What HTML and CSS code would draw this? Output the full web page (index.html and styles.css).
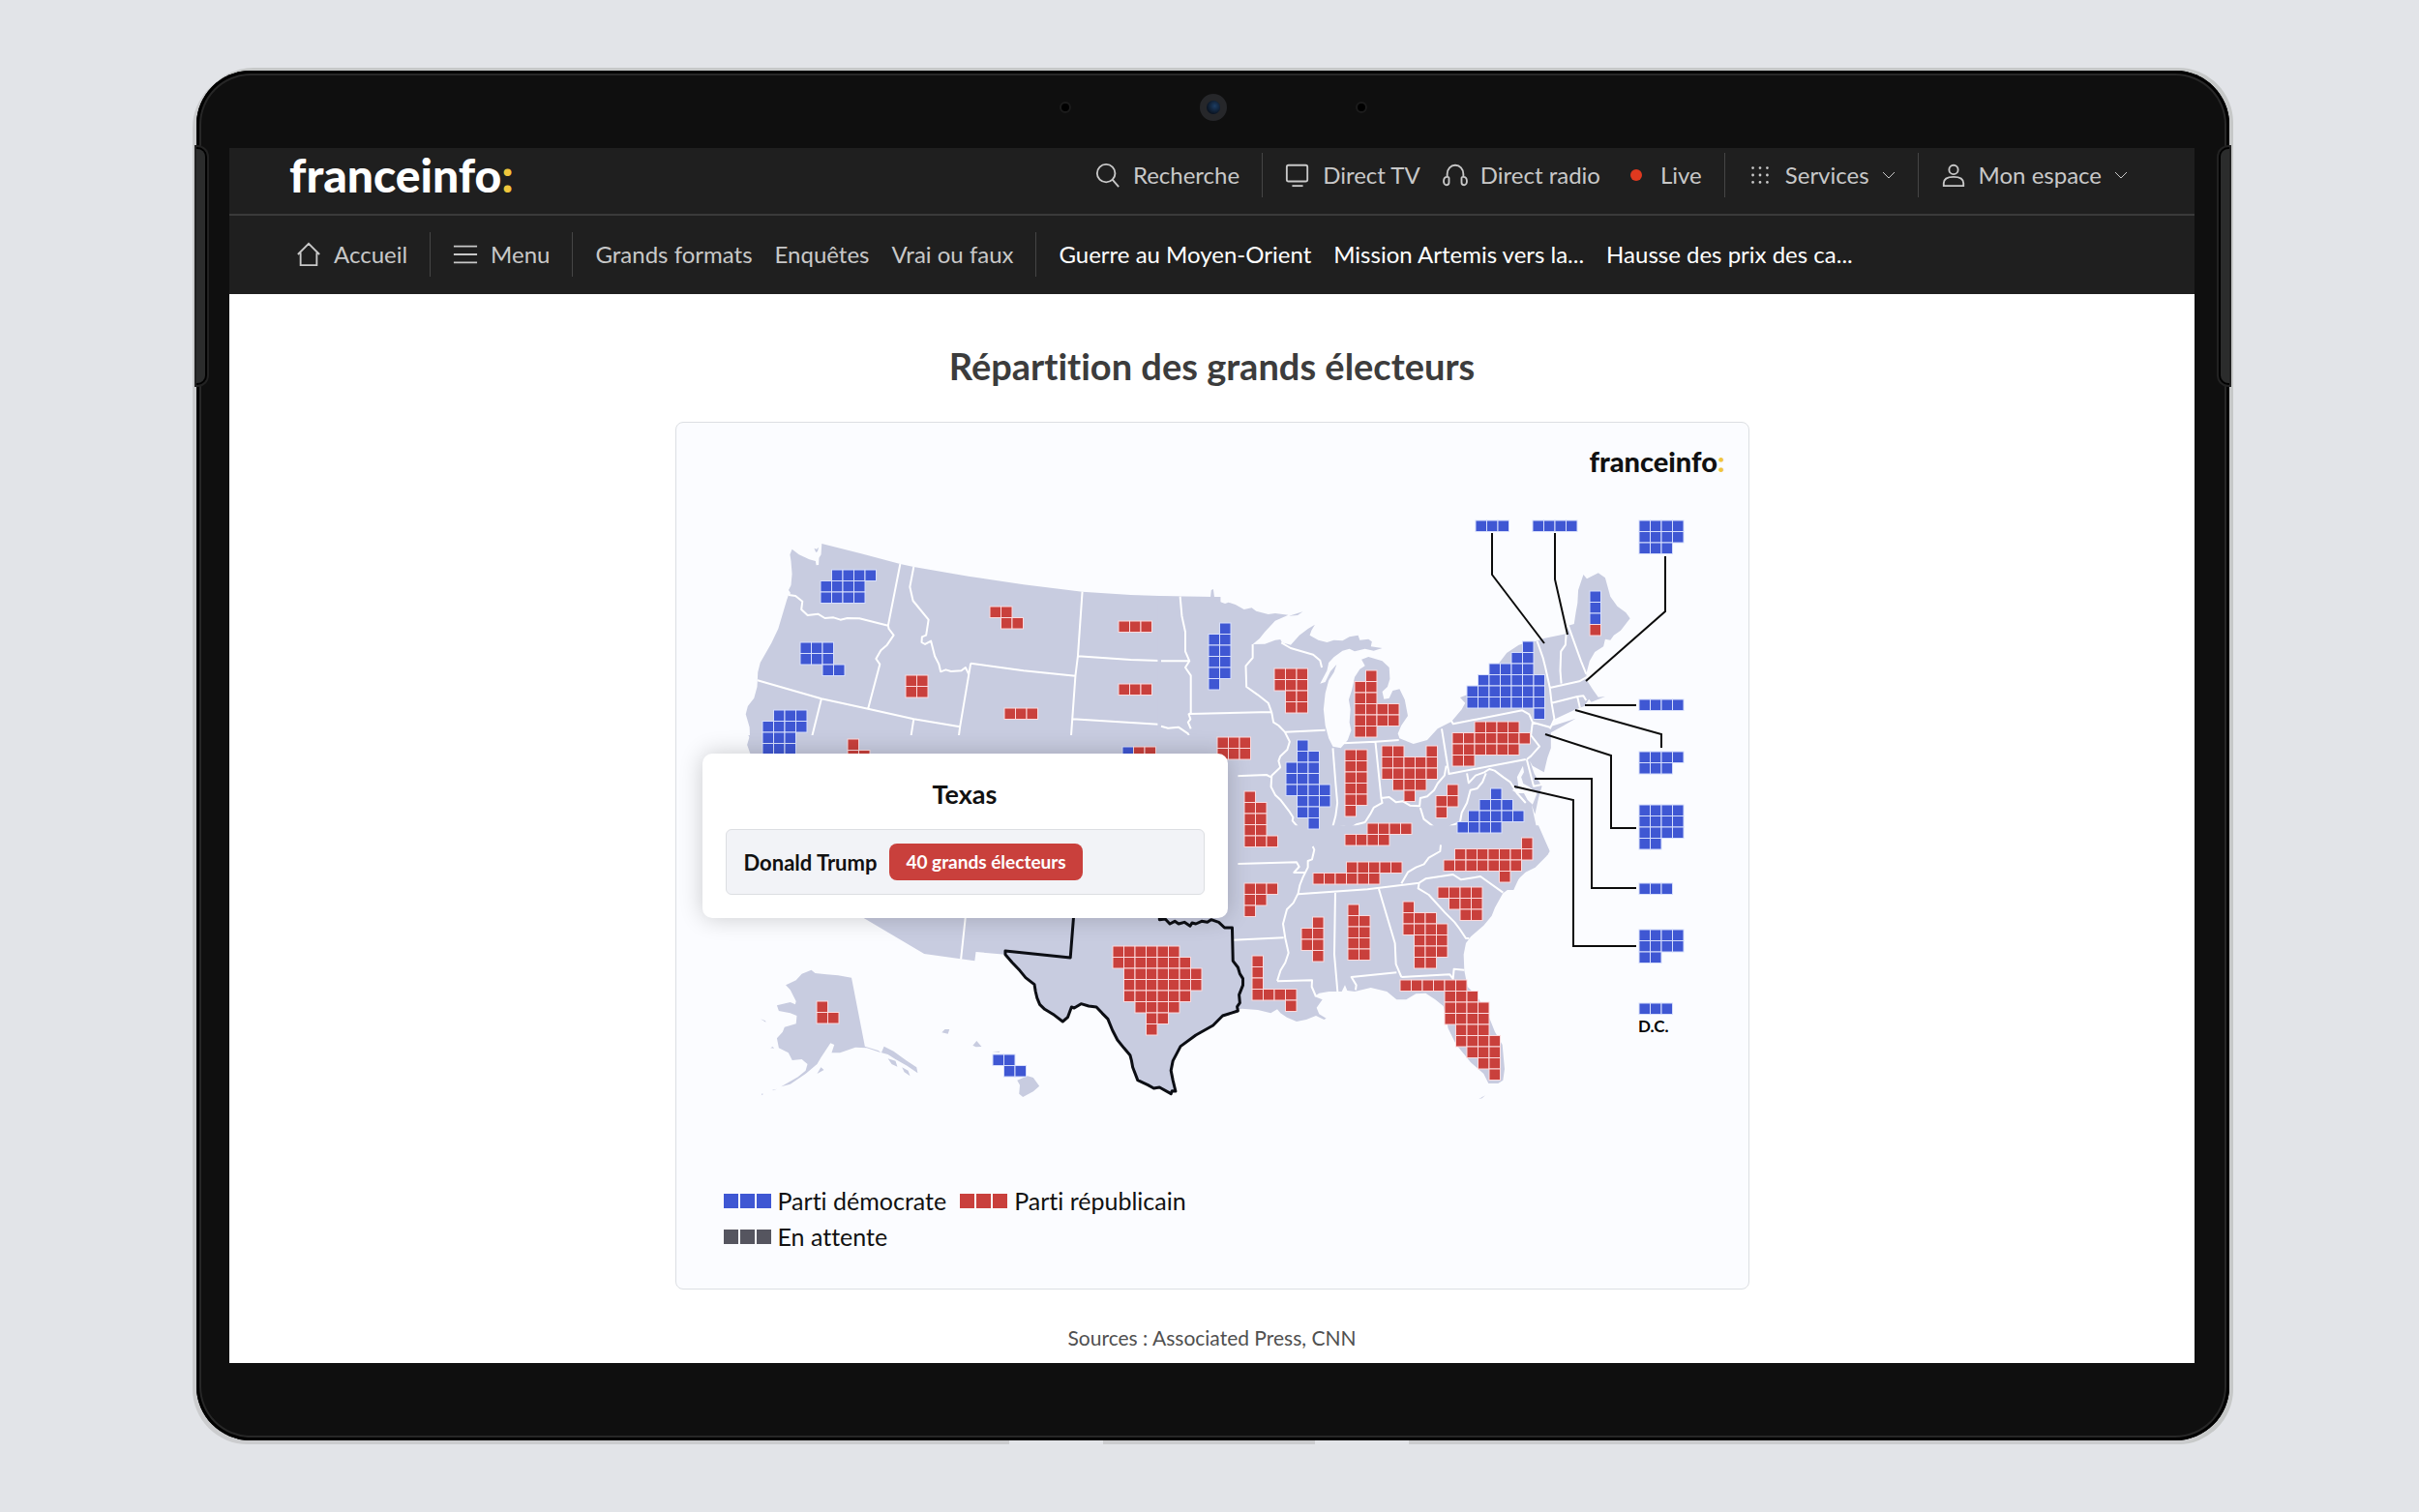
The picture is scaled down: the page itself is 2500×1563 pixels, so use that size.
FILE: index.html
```html
<!DOCTYPE html>
<html lang="fr">
<head>
<meta charset="utf-8">
<meta name="viewport" content="width=device-width, initial-scale=1">
<title>Répartition des grands électeurs - franceinfo</title>
<link rel="stylesheet" href="styles.css">
</head>
<body>
<div class="device">
  <span class="device-side device-side-left"></span>
  <span class="device-side device-side-right"></span>
  <span class="device-foot device-foot-left"></span>
  <span class="device-foot device-foot-right"></span>
  <div class="device-top">
    <span class="sensor"></span>
    <span class="camera"></span>
    <span class="sensor"></span>
  </div>

  <div class="screen">
    <header class="site-header">
      <div class="bar bar-top">
        <a class="logo" href="#">franceinfo<span class="logo-colon">:</span></a>
        <nav class="tools" aria-label="Outils">
          <button class="item" type="button">
            <svg class="icon" viewBox="0 0 28 28"><circle cx="12" cy="12" r="10"/><path d="M19 19L26 27"/></svg>
            Recherche
          </button>
          <span class="rule"></span>
          <a class="item" href="#">
            <svg class="icon" viewBox="0 0 28 28"><rect x="2" y="3" width="23" height="18" rx="2"/><path d="M8 26h12"/></svg>
            Direct TV
          </a>
          <a class="item" href="#">
            <svg class="icon" viewBox="0 0 28 28"><path d="M5 17V13C5 7 9 3 14 3S23 7 23 13V17M5 16C0 16 0 25 4 25C6 25 7 24 7 22V17C7 16 6 16 5 16ZM23 16C28 16 28 25 24 25C22 25 21 24 21 22V17C21 16 22 16 23 16Z"/></svg>
            Direct radio
          </a>
          <a class="item item-live" href="#"><span class="live-dot"></span>Live</a>
          <span class="rule"></span>
          <button class="item" type="button">
            <svg class="icon icon-dots" viewBox="0 0 28 28"><path d="M6 6h0M14 6h0M22 6h0M6 14h0M14 14h0M22 14h0M6 22h0M14 22h0M22 22h0"/></svg>
            Services
            <svg class="chevron" viewBox="0 0 14 14"><path d="M1 4l6 6 6-6"/></svg>
          </button>
          <span class="rule"></span>
          <button class="item" type="button">
            <svg class="icon" viewBox="0 0 28 28"><circle cx="14" cy="8" r="5"/><path d="M3 26V23C3 18 8 16 14 16S25 18 25 23V26Z"/></svg>
            Mon espace
            <svg class="chevron" viewBox="0 0 14 14"><path d="M1 4l6 6 6-6"/></svg>
          </button>
        </nav>
      </div>
      <nav class="bar bar-nav" aria-label="Navigation principale">
        <a class="item" href="#">
          <svg class="icon" viewBox="0 0 28 28"><path d="M2 14L14 2L26 14M5 12V26H23V12"/></svg>
          Accueil
        </a>
        <span class="rule"></span>
        <button class="item" type="button">
          <svg class="icon" viewBox="0 0 28 28"><path d="M1 5H27M1 14H27M1 23H27"/></svg>
          Menu
        </button>
        <span class="rule"></span>
        <a class="item" href="#">Grands formats</a>
        <a class="item" href="#">Enquêtes</a>
        <a class="item" href="#">Vrai ou faux</a>
        <span class="rule"></span>
        <a class="item item-hot" href="#">Guerre au Moyen-Orient</a>
        <a class="item item-hot" href="#">Mission Artemis vers la...</a>
        <a class="item item-hot" href="#">Hausse des prix des ca...</a>
      </nav>
    </header>

    <main class="content">
      <h1 class="title">Répartition des grands électeurs</h1>

      <section class="card">
        <div class="card-brand">franceinfo<span class="logo-colon">:</span></div>

        <svg class="map" viewBox="699 497 1108 700" role="img" aria-label="Carte des États-Unis">
          <!-- North-west -->
          <g transform="translate(690 420) scale(.35714 .33333)">
            <path class="land" d="M446 426L560 457L673 489L712 498L870 527L1030 553L1200 575L1340 585L1485 590L1600 591V1200H250L240 1080L230 1050L238 1020L237 995L226 955L232 930L250 905L259 870L260 850L261 825L268 795L300 735L320 690L345 600L350 585L356 580L350 570L357 555L360 520L357 480L354 460L360 443L380 460L410 475L428 480L430 493L437 492L438 470L444 460ZM424 440L431 443L437 437L434 450L429 453Z"/>
            <path class="border" d="M350 585L370 588L390 605L387 630L405 648L435 644L455 657L480 655L500 662L520 657L555 658L638 680M673 489L638 680L640 690L654 710L635 740L617 757L603 783L614 800L580 938M712 498L701 560L710 603L755 662L748 710L736 715L735 732L745 738L762 728L773 775L785 800L790 823L805 817L820 822L850 820L862 810L872 832M260 850L445 907L580 938L712 970L846 994M445 907L400 1100M712 970L693 1100M877 797L846 994L838 1060L980 1084M877 797L1030 820L1180 836M1200 575L1187 775L1180 836L1163 1090M1187 775L1340 786L1508 792M1485 590L1490 640L1497 670L1500 730L1508 780L1508 800L1496 812L1514 832V950L1507 965L1510 985L1503 1000M1172 970L1420 986L1440 1002L1450 995L1480 996L1500 1005L1512 1020L1520 1050L1532 1090"/>
          </g>
          <!-- North-east -->
          <g transform="translate(1200 520) scale(.35714 .33333)">
            <path class="land" d="M-10 289L143 291L145 270L151 267L155 300L185 312L195 308L215 315L240 330L262 325L275 335L310 345L330 342L368 347L330 365L300 400L285 420L265 438L300 437L330 425L345 423L350 433L375 440L400 410L425 390L445 377L435 395L430 410L455 425L480 432L500 425L525 427L545 415L570 410L575 425L600 422L610 430L607 445L640 450L615 458L590 452L560 460L545 452L525 458L500 478L485 495L480 520L460 560L475 555L490 522L508 500L500 525L485 550L475 590L470 640L475 690L485 730L497 755L520 760L540 735L550 705L545 680L548 640L543 610L552 580L560 540L575 515L590 505L580 485L600 477L640 490L660 510L662 545L655 570L640 585L645 608L660 605L670 582L690 577L705 610L714 660L695 690L685 715L690 730L730 747L770 735L800 700L840 678L870 640L880 620L865 603L885 595L920 590L960 570L985 520L975 500L1000 465L1035 440L1060 432L1085 428L1107 420L1175 405L1178 380L1195 375L1200 340L1205 310L1207 270L1222 222L1232 235L1265 217L1285 232L1300 290L1320 320L1345 340L1357 358L1330 395L1310 410L1300 425L1285 422L1280 445L1255 462L1240 490L1230 530L1232 550L1250 580L1265 602L1285 600L1245 617L1238 608L1225 630L1200 640L1140 670L1130 692L1200 668L1165 690L1128 712V760L1118 790L1108 835L1075 815L1067 800L1080 840L1102 878L1092 915L1082 965L1072 935L1085 1000L1122 1075L1120 1090L1080 1110L1050 1150L1035 1165L1020 1200H-10ZM370 350L410 337L395 348Z"/>
            <path class="water" d="M1047 815L1050 835L1042 850L1048 870L1065 880L1088 900L1075 935L1060 920L1050 900L1030 900L1015 890L1035 885L1030 850Z"/>
            <path class="border" d="M55 290L60 350L70 400L70 460L82 490L70 510L86 535V650L80 655L85 670L78 680L86 700M0 490H82M80 654L318 648M265 438V480L245 505L247 570L280 595L310 620L320 650L325 680L340 690L358 710L372 740L365 765L345 785L340 800L345 820L320 845L318 880L330 905L345 920L370 955L382 975L380 985L400 1010L425 1035L430 1070L440 1075L443 1095L430 1107M358 710L475 704M0 692L20 698L50 695L78 715L100 775M190 848L305 843L318 850M190 1121L395 1113L402 1125L385 1145L410 1148M348 433L375 450L440 470L460 488L465 510M497 760L505 870L510 930L505 970L495 1010M525 745L620 740L688 735M620 740L637 915M432 1072L450 1060L472 1068L485 1050L490 1020L500 1008L530 1003L545 1010L565 997L590 990L605 965L615 945L640 930L637 915L660 912L680 928L700 925L720 938L748 940L750 915L770 910L790 890L800 870L820 845L825 815M812 700L833 840L1055 795M838 672L845 685L1045 643L1065 655L1075 680L1125 695M1075 680L1070 720L1095 755L1070 785L1058 795M1088 428L1105 480L1112 510L1125 573L1130 620L1138 670L1125 700M1172 408L1170 440L1157 460L1155 520L1158 560M1178 380L1215 490L1230 530M1125 573L1210 553L1232 540M1130 620L1205 600L1222 598L1230 612M1205 602L1212 635M1058 795L1078 878L1102 873M885 838L890 868L910 845L935 835L950 825L965 830L990 850L1010 865L1030 900L1055 930M940 838L930 865L915 885L895 890L885 930L870 960L865 990L840 1000L815 1018L790 1005L760 980L750 945M785 1003L760 1045L715 1075M430 1107L495 1103L497 1092L715 1073L820 1057L1090 1008"/>
          </g>
          <!-- South-east -->
          <g transform="translate(1200 860) scale(.33333)">
            <path class="land" d="M180 -20H1170L1205 60L1195 75L1160 110L1120 130L1095 165L1060 190L1035 235L1025 260L1000 290L960 325L945 345L938 380L940 430L950 480L980 510L1015 570L1035 620L1058 660L1065 735L1060 770L1045 780L1015 780L1000 750L960 715L940 690L915 660L905 640L890 610L882 570L875 540L850 520L820 500L790 502L760 520L730 520L700 495L650 483L600 495L577 492L570 475L560 495L520 495L490 500L475 510L500 520L482 545L490 565L512 578L505 582L480 570L450 582L420 588L390 575L370 562L360 550L340 562L300 552L250 548L200 560ZM985 828L1005 817L995 826Z"/>
            <path class="border" d="M195 260L198 296M222 335L380 328M205 100L420 94L428 108L412 126H445M470 45L475 55L468 85L455 90V110L440 140L430 165L425 190L410 220L390 240L378 285L385 330L395 375L385 405L370 430L360 462M425 193L640 178L800 158L820 145L905 132L930 148L990 138L1060 188M540 187L537 380L547 495M360 463L468 460L467 480L480 510M675 177L725 345L728 410L745 450M603 490L605 475L590 450L730 436M745 450L895 442L905 455L908 425L940 428M800 158L797 175L830 195L880 250L910 280L925 300L945 330H955M867 40L865 60L830 80L815 100L790 110L765 125L745 160"/>
          </g>
          <!-- South-west, Texas, Alaska and Hawaii -->
          <g transform="translate(710 760) scale(.39541 .33333)">
            <path class="land" d="M160 0H1440V620L1002 690L832 680L755 672L752 700L620 678L463 568Z"/>
            <path class="border" d="M730 540L716 695"/>
            <path class="texas" d="M1012 540L1002 690L832 669L832 680L850 705L870 730L885 752L908 773L911 795L915 815L922 835L935 850L960 868L982 888L995 875L1005 843L1012 846L1030 833L1050 840L1070 843L1085 862L1100 880L1112 915L1125 945L1142 970L1158 992L1162 1010L1165 1030L1178 1070L1205 1085L1220 1095L1235 1092L1265 1112L1268 1103L1277 1104L1270 1070L1265 1040L1270 1010L1290 965L1330 930L1375 900L1400 870L1440 855L1438 842L1445 830L1443 805L1453 775V755L1445 740L1440 720L1427 700L1425 597L1405 597L1390 580L1370 572L1360 580L1345 577L1330 585L1320 582L1315 592L1300 580L1285 585L1275 577L1262 585L1250 570L1235 572V540Z"/>
            <path class="land" d="M325 728L335 738L365 742L395 745L430 752L465 965L500 978L508 985L515 965L540 980L575 1010L600 1030L603 1048L575 1025L545 1005L525 990L500 982L470 970L440 968L400 985L378 985L385 960L375 955L350 1000L340 1020L310 1050L270 1082L246 1090L290 1060L310 1040L315 1020L300 1005L275 1008L265 985L240 970L235 940L250 920L255 905L285 895L287 870L270 862L240 855L235 838L270 828L283 835L285 825L270 790L258 775L285 760L300 740ZM340 1050L350 1030L358 1038ZM525 1003L545 1010L550 1028L535 1020ZM562 1030L578 1040L583 1057L568 1045ZM223 1100L235 1097L225 1102ZM194 1117L197 1110L199 1114ZM218 970L224 966L228 971ZM192 880L205 886L206 890ZM666 922L674 912L686 912L682 926ZM747 962L757 948L770 966L755 967ZM797 981L818 980L816 984ZM890 1057L905 1062L921 1088L905 1105L878 1122L868 1112L870 1085L863 1070Z"/>
          </g>
          <g class="cells"></g>
          <g class="leaders">
            <path d="M1542 551V594L1596 665M1607 551V599L1620 656M1721 575V632L1639 704M1638 729H1691M1628 734L1717 759V773M1597 759L1665 781V856H1691M1586 805H1645V918H1691M1565 813L1626 827V978H1691"/>
          </g>
          <text class="dc-label" x="1693" y="1067">D.C.</text>
        </svg>

        <aside class="popup">
          <h2 class="popup-title">Texas</h2>
          <div class="popup-row">
            <span class="candidate">Donald Trump</span>
            <span class="badge">40 grands électeurs</span>
          </div>
        </aside>

        <ul class="legend">
          <li class="legend-item dem"><span class="swatch"></span><span class="swatch"></span><span class="swatch"></span>Parti démocrate</li>
          <li class="legend-item rep"><span class="swatch"></span><span class="swatch"></span><span class="swatch"></span>Parti républicain</li>
          <li class="legend-item wait"><span class="swatch"></span><span class="swatch"></span><span class="swatch"></span>En attente</li>
        </ul>
      </section>

      <p class="sources">Sources : Associated Press, CNN</p>
    </main>
  </div>
</div>
<script src="map.js"></script>
</body>
</html>
```

FILE: map.js
```js
// One entry per state: left, top, then rows of electors (B: democrat, R: republican)
const STATES = {
  WA: [848, 589, ".BBBB BBBB BBBB"],
  OR: [827, 664, "BBB BBB ..BB"],
  CA: [788, 734, ".BBB BBBB BBB BBB"],
  NV: [876, 764, "R RR"],
  ID: [936, 698, "RR RR"],
  MT: [1023, 627, "RR .RR"],
  WY: [1038, 732, "RRR"],
  ND: [1156, 642, "RRR"],
  SD: [1156, 707, "RRR"],
  NE: [1160, 772, "BRR"],
  MN: [1249, 644, ".B BB BB BB BB B"],
  WI: [1317, 691, "RRR RRR .RR .RR"],
  MI: [1400, 693, ".R RR RR RRRR RRRR RR"],
  IA: [1258, 762, "RRR RRR"],
  IL: [1329, 765, ".B .BB BBB BBB BBBB .BBB .BB ..B"],
  IN: [1390, 775, "RR RR RR RR RR R"],
  OH: [1428, 771, "RR..R RRRRR RRRRR .RRR ..R"],
  MO: [1286, 818, "R RR RR RR RRR"],
  KY: [1390, 851, "..RRRR RRRR"],
  WV: [1484, 811, ".R RR R"],
  VA: [1506, 815, "...B ..BBB .BBBBB BBBB"],
  PA: [1501, 746, "..RRRR RRRRRRR RRRRRR RR"],
  NY: [1516, 663, ".....B ....BB ..BBBB .BBBBBB BBBBBBB BBBBBBB ......B"],
  ME: [1643, 611, "B B B R"],
  TN: [1357, 891, "...RRRRR RRRRRR"],
  NC: [1492, 866, ".......R .RRRRRRR RRRRRRR .....R"],
  AR: [1286, 913, "RRR RR R"],
  LA: [1294, 988, "R R R RRRR ...R"],
  MS: [1345, 948, ".R RR RR .R"],
  AL: [1393, 935, "R RR RR RR RR"],
  GA: [1450, 932, "R RRR RRRR .RRR .RRR .RR"],
  SC: [1486, 917, "RRRR .RRR ..RR"],
  FL: [1447, 1013, "RRRRRR ....RRR ....RRRR ....RRRR .....RRR .....RRRR ......RRR .......RR ........R"],
  TX: [1150, 978, "RRRRRR RRRRRRR .RRRRRRR .RRRRRRR .RRRRRR ..RRRR ...RR ...R"],
  AK: [844, 1035, "R RR"],
  HI: [1026, 1090, "BB .BB"],
  VT: [1525, 538, "BBB"],
  NH: [1584, 538, "BBBB"],
  MA: [1694, 538, "BBBB BBBB BBB"],
  RI: [1694, 723, "BBBB"],
  CT: [1694, 777, "BBBB BBB"],
  NJ: [1694, 832, "BBBB BBBB BBBB BB"],
  DE: [1694, 913, "BBB"],
  MD: [1694, 961, "BBBB BBBB BB"],
  DC: [1694, 1037, "BBB"]
};
const STEP = 11.5;
const layer = document.querySelector(".cells");
for (const [left, top, rows] of Object.values(STATES)) {
  rows.split(" ").forEach((row, r) => {
    [...row].forEach((party, c) => {
      if (party === ".") return;
      const cell = document.createElementNS("http://www.w3.org/2000/svg", "rect");
      cell.setAttribute("x", left + c * STEP);
      cell.setAttribute("y", top + r * STEP);
      cell.setAttribute("width", STEP);
      cell.setAttribute("height", STEP);
      cell.setAttribute("class", party === "B" ? "cell-dem" : "cell-rep");
      layer.append(cell);
    });
  });
}
```

FILE: styles.css
```css
* { box-sizing: border-box; }

body {
  margin: 0;
  padding: 73px 196px 75px 203px;
  background: #e2e4e8;
  color: #111;
  font-family: Lato, "Open Sans", sans-serif;
  font-variant-ligatures: none;
}

a { color: inherit; text-decoration: none; }
button { padding: 0; border: 0; background: none; color: inherit; font: inherit; }

/* Tablet frame */
.device {
  position: relative;
  padding: 0 36px 80px 34px;
  border-radius: 56px;
  background: #0f0f0f;
  box-shadow: inset 0 0 0 3px #000, inset 0 0 0 5px #272727, 3px -2px 0 1px #c6c8c8, -3px 3px 0 1px #cbccce, 3px 3px 0 1px #c6c8c8;
}
.device-side {
  position: absolute;
  top: 79px;
  width: 11px;
  height: 246px;
  border: 2px solid #000;
  background: #2b2c2c;
  box-shadow: 0 0 0 2px #222;
}
.device-side-left { left: 0; border-left: 0; border-radius: 0 10px 10px 0; }
.device-side-right { right: 0; border-right: 0; border-radius: 10px 0 0 10px; }
.device-foot {
  position: absolute;
  top: 100%;
  width: 97px;
  height: 8px;
  background: #e2e4e8;
}
.device-foot-left { left: 40%; }
.device-foot-right { left: 55%; }
.device-top {
  display: flex;
  align-items: center;
  justify-content: center;
  gap: 133px;
  height: 80px;
  padding-left: 3px;
}
.sensor { width: 12px; height: 12px; margin-top: -4px; border: 2px solid #1c1c1c; border-radius: 50%; background: #000; }
.camera { width: 28px; height: 28px; margin-top: -4px; border: 7px solid #26272a; border-radius: 50%; background: radial-gradient(circle at 60% 40%, #1d3d63, #0a1422 70%); }

.screen { background: #fff; }

/* Header */
.site-header { background: #1f1f1f; color: #c8c8c8; font-size: 24px; line-height: 46px; }
.bar { display: flex; align-items: center; gap: 23px; padding: 0 69px; }
.bar-top { justify-content: space-between; padding: 5px 69px 17px 62px; border-bottom: 2px solid #3a3a3a; }
.bar-nav { height: 81px; padding-bottom: 2px; }
.tools { display: flex; align-items: center; gap: 23px; }
.item { display: flex; align-items: center; gap: 13px; white-space: nowrap; }
.item-hot { color: #fff; }
.item-live { gap: 19px; padding-left: 8px; }
.live-dot { width: 12px; height: 12px; border-radius: 50%; background: #e0391f; }
.rule { width: 1px; height: 46px; background: #454545; }
.logo { color: #fff; font-size: 48px; font-weight: 900; }
.logo-colon { color: #f0c63c; }
.icon { width: 26px; height: 26px; fill: none; stroke: #c8c8c8; stroke-width: 2; }
.icon-dots { stroke-width: 3; stroke-linecap: round; }
.chevron { width: 14px; height: 14px; fill: none; stroke: #c8c8c8; stroke-width: 1; }

/* Page */
.content { display: flex; flex-direction: column; align-items: center; padding: 50px 32px 10px; }
.title { margin: 0 0 34px; color: #3c3c3c; font-size: 38px; line-height: 48px; }
.card {
  position: relative;
  width: 100%;
  max-width: 1110px;
  padding-top: 20px;
  border: 1px solid #dcdfe3;
  border-radius: 8px;
  background: #fbfcff;
}
.card-brand { padding-right: 24px; font-size: 29px; font-weight: 900; line-height: 40px; text-align: right; }

/* Map */
.map { display: block; width: 100%; }
.land { fill: #c8cce0; }
.water { fill: #fbfcff; }
.border { fill: none; stroke: #fff; stroke-width: 2; stroke-linejoin: round; vector-effect: non-scaling-stroke; }
.texas { fill: #c8cce0; stroke: #0c0e14; stroke-width: 3; stroke-linejoin: round; vector-effect: non-scaling-stroke; }
.leaders { fill: none; stroke: #0c0c0c; stroke-width: 2; }
.cells { stroke-width: 1; }
.cell-dem { fill: #3f57d3; stroke: #d6defc; }
.cell-rep { fill: #c9403c; stroke: #fbd9dc; }
.dc-label { font-size: 17px; font-weight: 700; }

/* State popup */
.popup {
  position: absolute;
  top: 342px;
  left: 27px;
  width: 543px;
  padding: 18px 24px 24px;
  border-radius: 10px;
  background: #fff;
  box-shadow: 0 0 24px rgba(0, 0, 0, .2);
}
.popup-title { margin: 0 0 12px; font-size: 27px; line-height: 48px; text-align: center; }
.popup-row {
  display: flex;
  align-items: center;
  gap: 13px;
  height: 68px;
  padding: 0 18px;
  border: 1px solid #dcdee2;
  border-radius: 6px;
  background: #f2f3f7;
}
.candidate { font-size: 22px; font-weight: 700; }
.badge { padding: 0 17px; border-radius: 8px; background: #c9403c; color: #fff; font-size: 19px; font-weight: 700; line-height: 38px; }

/* Legend */
.legend { display: flex; flex-wrap: wrap; column-gap: 14px; max-width: 600px; margin: 26px 0 35px; padding: 0 49px; list-style: none; font-size: 25px; line-height: 37px; }
.legend-item { display: flex; align-items: center; gap: 2px; }
.swatch { width: 15px; height: 15px; }
.swatch:nth-child(3) { margin-right: 5px; }
.dem .swatch { background: #3f57d3; }
.rep .swatch { background: #c9403c; }
.wait .swatch { background: #55555f; }

.sources { margin: 34px 0 0; color: #505050; font-size: 21px; line-height: 32px; }
```
